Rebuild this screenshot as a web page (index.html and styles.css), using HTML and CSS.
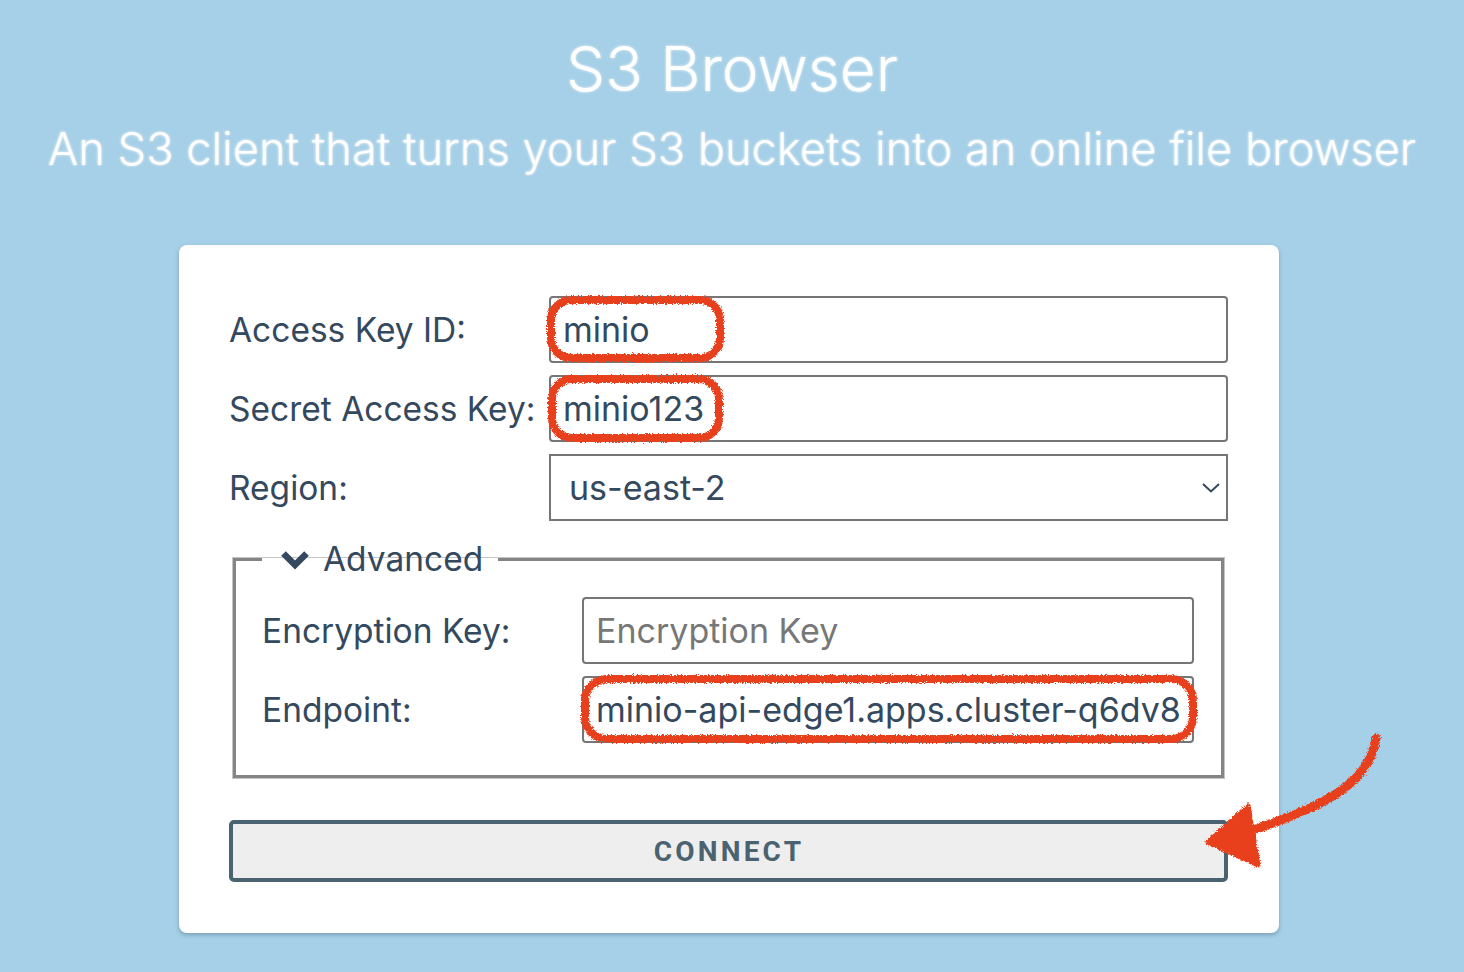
FILE: index.html
```html
<!DOCTYPE html>
<html lang="en">
<head>
<meta charset="utf-8">
<title>S3 Browser</title>
<link rel="stylesheet" href="styles.css">
</head>
<body>
<header class="header">
  <h1 class="title">S3 Browser</h1>
  <p class="subtitle">An S3 client that turns your S3 buckets into an online file browser</p>
</header>
<main class="card">
  <form class="login-form">
    <div class="grid">
      <label class="label" for="akid">Access Key ID:</label>
      <input class="input" id="akid" type="text" value="minio">
      <label class="label" for="sak">Secret Access Key:</label>
      <input class="input" id="sak" type="text" value="minio123">
      <label class="label" for="region">Region:</label>
      <div class="select-wrap">
        <select class="select" id="region">
          <option>us-east-2</option>
        </select>
        <svg class="select-chevron" width="18" height="10" viewBox="0 0 18 10"><path d="M1 1 L9 8.5 L17 1" fill="none" stroke="#34495e" stroke-width="2"/></svg>
      </div>
    </div>
    <fieldset class="advanced">
      <legend class="legend">
        <svg class="legend-icon" width="30" height="20" viewBox="0 0 30 20"><path d="M3.5 3.5 L15 15 L26.5 3.5" fill="none" stroke="#34495e" stroke-width="6.5"/></svg>
        <span>Advanced</span>
      </legend>
      <div class="grid grid-inner">
        <label class="label" for="enc">Encryption Key:</label>
        <input class="input" id="enc" type="text" placeholder="Encryption Key">
        <label class="label" for="endpoint">Endpoint:</label>
        <input class="input" id="endpoint" type="text" value="minio-api-edge1.apps.cluster-q6dv8">
      </div>
    </fieldset>
    <button class="connect" type="button">CONNECT</button>
  </form>
</main>
<svg class="annotations" width="1464" height="972" viewBox="0 0 1464 972">
  <defs>
    <filter id="rough" x="-5%" y="-20%" width="110%" height="140%">
      <feTurbulence type="fractalNoise" baseFrequency="1.2" numOctaves="2" seed="3" result="n"/>
      <feDisplacementMap in="SourceGraphic" in2="n" scale="5" xChannelSelector="R" yChannelSelector="G"/>
    </filter>
  </defs>
  <g filter="url(#rough)" fill="none" stroke="#e8411f" stroke-width="8">
    <rect x="551" y="300" width="169" height="58" rx="20"/>
    <rect x="552" y="379" width="167" height="59" rx="20"/>
    <rect x="585" y="679" width="608" height="60" rx="22"/>
    <path d="M1376 738 C1370 778, 1338 802, 1250 831" stroke-width="9" stroke-linecap="round"/>
    <path d="M1208 842 L1248 806 L1258 865 Z" fill="#e8411f" stroke-width="5" stroke-linejoin="round"/>
  </g>
</svg>
</body>
</html>
```

FILE: styles.css
```css
html, body {
  margin: 0;
  padding: 0;
}
body {
  background: #a6d0e8;
  width: 1464px;
  height: 972px;
  overflow: hidden;
  position: relative;
  font-family: Inter, "Noto Sans", sans-serif;
  color: #34495e;
}
.header {
  padding-top: 29px;
  text-align: center;
  color: #ffffff;
  font-family: Inter, "Noto Sans", sans-serif;
  font-weight: 300;
  text-shadow: 0 0 3px rgba(255, 255, 255, 0.9);
}
.title {
  margin: 0;
  font-size: 62px;
  line-height: 80px;
  font-weight: 300;
}
.subtitle {
  margin: 12px 0 0;
  font-size: 45px;
  line-height: 56px;
  font-weight: 300;
  letter-spacing: 0.1px;
}
.card {
  box-sizing: border-box;
  width: 1100px;
  margin: 68px 0 0 179px;
  padding: 51px 51px 51px 50px;
  background: #ffffff;
  border-radius: 8px;
  box-shadow: 0 2px 4px rgba(40, 70, 90, 0.35);
}
.login-form {
  display: flex;
  flex-direction: column;
}
.grid {
  display: grid;
  grid-template-columns: 320px 1fr;
  grid-auto-rows: 67px;
  row-gap: 12px;
  align-items: center;
}
.grid-inner {
  grid-template-columns: 320px 1fr;
}
.label {
  font-size: 33.5px;
  color: #34495e;
  white-space: nowrap;
}
.input {
  box-sizing: border-box;
  height: 67px;
  width: 100%;
  border: 2px solid #767676;
  border-radius: 4px;
  padding: 0 12px;
  font-family: Inter, "Noto Sans", sans-serif;
  font-size: 34px;
  color: #34495e;
  background: #ffffff;
  outline: none;
}
.input::placeholder {
  color: #777777;
}
.select-wrap {
  position: relative;
  height: 67px;
}
.select {
  box-sizing: border-box;
  height: 67px;
  width: 100%;
  border: 2px solid #767676;
  border-radius: 0;
  padding: 0 18px;
  font-family: Inter, "Noto Sans", sans-serif;
  font-size: 34px;
  color: #34495e;
  background: #ffffff;
  appearance: none;
  -webkit-appearance: none;
  outline: none;
}
.select-chevron {
  position: absolute;
  right: 8px;
  top: 29px;
}
.advanced {
  margin: 19px 4px 0 4px;
  padding: 18px 27px 32px 26px;
  border: 3px solid #858585;
  box-shadow: 0 0 0 1px #c4c4c4;
}
.legend {
  padding: 0 15px 0 18px;
  font-size: 33.5px;
  line-height: 39px;
  color: #34495e;
  display: flex;
  align-items: center;
  gap: 13px;
}
.legend-icon {
  display: block;
}
.connect {
  margin-top: 42px;
  height: 62px;
  width: 100%;
  box-sizing: border-box;
  border: 4px solid #4a6371;
  border-radius: 5px;
  background: #eeeeee;
  color: #4a6371;
  font-family: Roboto, "Liberation Sans", sans-serif;
  font-weight: 700;
  font-size: 28px;
  letter-spacing: 3.2px;
  padding: 0 0 0 1px;
}
.annotations {
  position: absolute;
  top: 0;
  left: 0;
  pointer-events: none;
}
```
